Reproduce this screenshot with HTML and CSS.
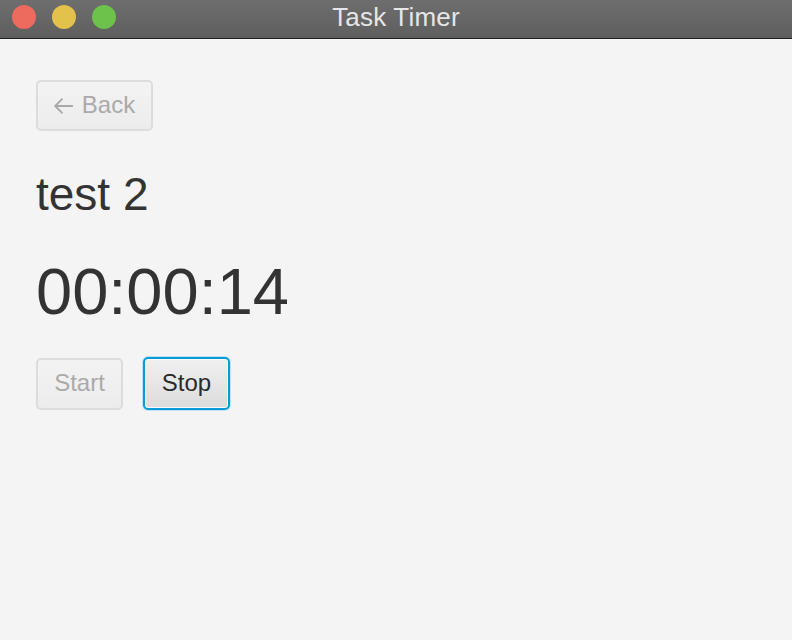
FILE: index.html
```html
<!DOCTYPE html>
<html>
<head>
<meta charset="utf-8">
<link rel="stylesheet" href="styles.css">
</head>
<body>
<div class="window">
  <div class="titlebar">
    <div class="lights">
      <span class="light red"></span>
      <span class="light yellow"></span>
      <span class="light green"></span>
    </div>
    <div class="title">Task Timer</div>
  </div>
  <div class="content">
    <button class="btn back disabled">
      <svg class="arrow" width="19" height="16" viewBox="0 0 19 16" aria-hidden="true">
        <path d="M18.3 8 H1.2 M8 1.2 L1.2 8 L8 14.8" fill="none" stroke="#a9a9a9" stroke-width="1.8" stroke-linecap="round" stroke-linejoin="round"/>
      </svg>
      <span>Back</span>
    </button>
    <div class="task">test 2</div>
    <div class="timer">00:00:14</div>
    <div class="actions">
      <button class="btn start disabled">Start</button>
      <button class="btn stop focused">Stop</button>
    </div>
  </div>
</div>
</body>
</html>
```
FILE: styles.css
```css
html, body {
  margin: 0;
  padding: 0;
  background: #f4f4f4;
  font-family: "Liberation Sans", Arial, sans-serif;
}
.window {
  width: 792px;
  height: 640px;
  display: flex;
  flex-direction: column;
  overflow: hidden;
}
.titlebar {
  position: relative;
  height: 38px;
  flex: none;
  background: linear-gradient(#6e6e6e, #5e5e5e);
  border-bottom: 1px solid #1e1e1e;
  display: flex;
  align-items: center;
  justify-content: center;
}
.lights {
  position: absolute;
  left: 12px;
  top: 5px;
  display: flex;
  gap: 16px;
}
.light {
  width: 24px;
  height: 24px;
  border-radius: 50%;
  display: block;
}
.red { background: #ed6a5e; }
.yellow { background: #e2c24a; }
.green { background: #6cc24a; }
.title {
  color: #e6e6e6;
  font-size: 26px;
  letter-spacing: 0.2px;
  margin-top: -3px;
}
.content {
  flex: 1;
  padding: 41px 36px 0;
  display: flex;
  flex-direction: column;
  align-items: flex-start;
}
.btn {
  font-family: "Liberation Sans", Arial, sans-serif;
  font-size: 24px;
  height: 51px;
  border-radius: 5px;
  border: 1px solid #c8c8c8;
  background: linear-gradient(#f2f2f2, #e2e2e2);
  color: #333;
  padding: 0 0 2px;
  display: flex;
  align-items: center;
  justify-content: center;
  box-sizing: border-box;
}
.btn.disabled {
  border: 2px solid #dcdcdc;
  background: linear-gradient(#f3f3f3, #ececec);
  color: #aaaaaa;
}
.back {
  width: 117px;
  gap: 9px;
}
.arrow {
  display: block;
  flex: none;
  margin-top: 2px;
}
.task {
  margin-top: 40px;
  font-size: 46px;
  line-height: 46px;
  color: #333;
}
.timer {
  margin-top: 42px;
  font-size: 65px;
  line-height: 65px;
  color: #333;
}
.actions {
  margin-top: 34px;
  display: flex;
  gap: 20px;
}
.start { width: 87px; height: 52px; }
.stop {
  width: 87px;
  height: 53px;
  margin-top: -1px;
  border: 2px solid #0c9ad6;
  box-shadow: 0 0 0 1px #bfe3f3, inset 0 0 0 1px #f8f8f8;
  background: linear-gradient(#f0f0f0, #dcdcdc);
  color: #2a2a2a;
}
```
